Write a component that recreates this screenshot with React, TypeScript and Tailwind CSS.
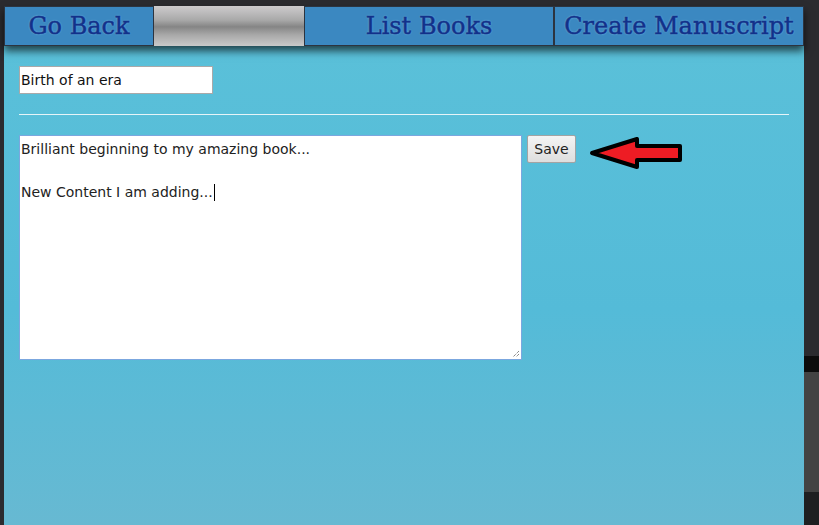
import React from "react";

const navFont = { fontFamily: '"DejaVu Serif", "Liberation Serif", serif' };
const bodyFont = { fontFamily: '"DejaVu Sans", "Liberation Sans", sans-serif' };

function NavButton({ label, w }: { label: string; w: string }) {
  return (
    <div
      className={`${w} h-full flex items-center justify-center border border-[#2c3440] bg-[#3b88c1] text-[24px] text-[#12318a] [-webkit-text-stroke:0.5px_#12318a] [text-shadow:0_0_2px_rgba(140,200,240,0.9)]`}
      style={navFont}
    >
      {label}
    </div>
  );
}

export default function App() {
  return (
    <div className="w-[819px] h-[525px] bg-[#2b2b2f] flex overflow-hidden">
      <div className="w-[4px]" />
      <div className="w-[800px] flex flex-col pt-[6px]">
        <div className="relative z-10 h-[40px] flex shadow-[0_5px_8px_rgba(0,0,0,0.65)]">
          <NavButton label="Go Back" w="w-[150px]" />
          <div className="w-[150px] h-full bg-[linear-gradient(to_bottom,#cdcbcd_0%,#a9a9a9_35%,#858585_52%,#a8a8a8_72%,#c9c9c9_100%)]" />
          <NavButton label="List Books" w="w-[250px]" />
          <NavButton label="Create Manuscript" w="w-[250px]" />
        </div>
        <div
          className="flex-1 bg-[linear-gradient(to_bottom,#5ac0d9_0%,#54bbd8_55%,#67b9d2_100%)] px-[15px] pt-[20px]"
          style={bodyFont}
        >
          <div className="w-[194px] h-[28px] bg-white border border-[#a9a9a9] flex items-center pl-[1px] text-[14px] text-[#111]">
            Birth of an era
          </div>
          <div className="mt-[20px] h-px bg-[#e6f4f8]" />
          <div className="mt-[20px] flex items-start gap-[5px]">
            <div className="relative w-[503px] h-[225px] bg-white border border-[#7ba7df] pl-[1px] pt-[3px] text-[14px] leading-[21.5px] text-[#222]">
              <div>Brilliant beginning to my amazing book...</div>
              <div>&nbsp;</div>
              <div className="flex items-center">
                New Content I am adding...
                <span className="inline-block w-px h-[17px] bg-black ml-px" />
              </div>
              <svg className="absolute right-[1px] bottom-[1px]" width="10" height="10" viewBox="0 0 10 10">
                <path d="M9 3 L3 9 M9 6 L6 9" stroke="#555" strokeWidth="1" strokeDasharray="1 1" />
              </svg>
            </div>
            <button className="w-[49px] h-[28px] border border-[#a3a3a3] rounded-[2px] bg-[linear-gradient(to_bottom,#f4f4f4,#dedede)] text-[14px] text-[#222]">
              Save
            </button>
            <svg width="106" height="40" viewBox="0 0 106 40" className="ml-[-1px] mt-[-1px]">
              <polygon
                points="12,19 57,5 57,12 100,12 100,26 57,26 57,33"
                fill="#ee1c24"
                stroke="#000"
                strokeWidth="4"
                strokeLinejoin="round"
              />
            </svg>
          </div>
        </div>
      </div>
      <div className="flex-1 flex flex-col">
        <div className="h-[356px] bg-[#2b2b2f]" />
        <div className="h-[16px] bg-[#0c0c0c]" />
        <div className="h-[120px] bg-[#434343]" />
        <div className="flex-1 bg-[#1e1f21]" />
      </div>
    </div>
  );
}
